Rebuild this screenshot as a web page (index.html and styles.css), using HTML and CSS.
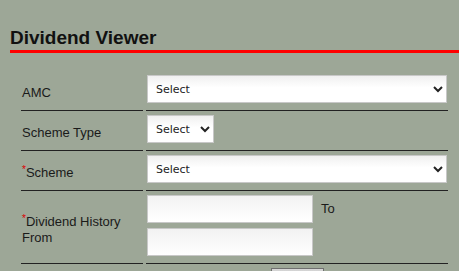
FILE: index.html
```html
<!DOCTYPE html>
<html lang="en">
<head>
    <meta charset="UTF-8">
    <meta name="viewport" content="width=device-width, initial-scale=1.0">
    <title>Dividend Viewer</title>
    <link rel="stylesheet" href="styles.css">
</head>
<body>
    <h2 class="page-title">Dividend Viewer</h2>

    <table class="form-table">
        <tr>
            <td class="label-cell">AMC</td>
            <td class="field-cell">
                <select class="select wide">
                    <option>Select</option>
                </select>
            </td>
        </tr>
        <tr>
            <td class="label-cell">Scheme Type</td>
            <td class="field-cell">
                <select class="select">
                    <option>Select</option>
                </select>
            </td>
        </tr>
        <tr>
            <td class="label-cell"><span class="required">*</span>Scheme</td>
            <td class="field-cell">
                <select class="select wide">
                    <option>Select</option>
                </select>
            </td>
        </tr>
        <tr>
            <td class="label-cell"><span class="required">*</span>Dividend History From</td>
            <td class="field-cell">
                <div class="date-range">
                    <div class="date-inputs">
                        <input type="text" class="text-input">
                        <input type="text" class="text-input">
                    </div>
                    <span class="to-label">To</span>
                </div>
            </td>
        </tr>
        <tr>
            <td class="button-row"></td>
            <td class="button-row">
                <button class="go-button">Go</button>
            </td>
        </tr>
    </table>
</body>
</html>
```

FILE: styles.css
```css
body {
    margin: 0;
    padding: 0;
    background-color: #9da797;
    font-family: Arial, "Liberation Sans", sans-serif;
    color: #1a1a1a;
    overflow: hidden;
}
.page-title {
    margin: 27px 0 0 10px;
    padding: 0 0 1px 0;
    font-size: 19px;
    line-height: 22px;
    font-weight: bold;
    color: #111;
    border-bottom: 3px solid #f00;
}
.form-table {
    margin: 18px 0 0 18px;
    width: 433px;
    border-collapse: separate;
    border-spacing: 3px;
}
.label-cell {
    width: 121px;
    padding: 5px 0 3px 1px;
    font-size: 13px;
    line-height: 16px;
    vertical-align: middle;
    border-bottom: 1px solid #222;
}
.field-cell {
    padding: 1px 0 7px 1px;
    vertical-align: middle;
    border-bottom: 1px solid #222;
}
.required {
    color: #d00;
    font-size: 10px;
    line-height: 10px;
    vertical-align: top;
}
.select {
    height: 28px;
    width: 67px;
    padding: 0 2px 0 4px;
    font-family: Verdana, "DejaVu Sans", sans-serif;
    font-size: 11px;
    color: #222;
    border: 1px solid #c8c8c8;
    border-radius: 0;
    background: linear-gradient(#f0f0f0, #ffffff 45%);
    display: block;
}
.select.wide {
    width: 300px;
}
.date-range {
    display: flex;
    align-items: flex-start;
    gap: 8px;
}
.date-inputs {
    display: flex;
    flex-direction: column;
    gap: 5px;
}
.text-input {
    width: 166px;
    height: 28px;
    box-sizing: border-box;
    margin: 0;
    border: 1px solid #c8c8c8;
    background: linear-gradient(#f2f2f2, #ffffff);
    font-size: 12px;
}
.to-label {
    font-size: 13px;
    line-height: 28px;
}
.button-row {
    padding: 1px 0 0 0;
    text-align: center;
}
.go-button {
    width: 53px;
    height: 24px;
    border: 1px solid #6f6f6f;
    background: linear-gradient(#d8d8d8, #9a9a9a);
    font-family: Arial, "Liberation Sans", sans-serif;
    font-size: 12px;
}
```
